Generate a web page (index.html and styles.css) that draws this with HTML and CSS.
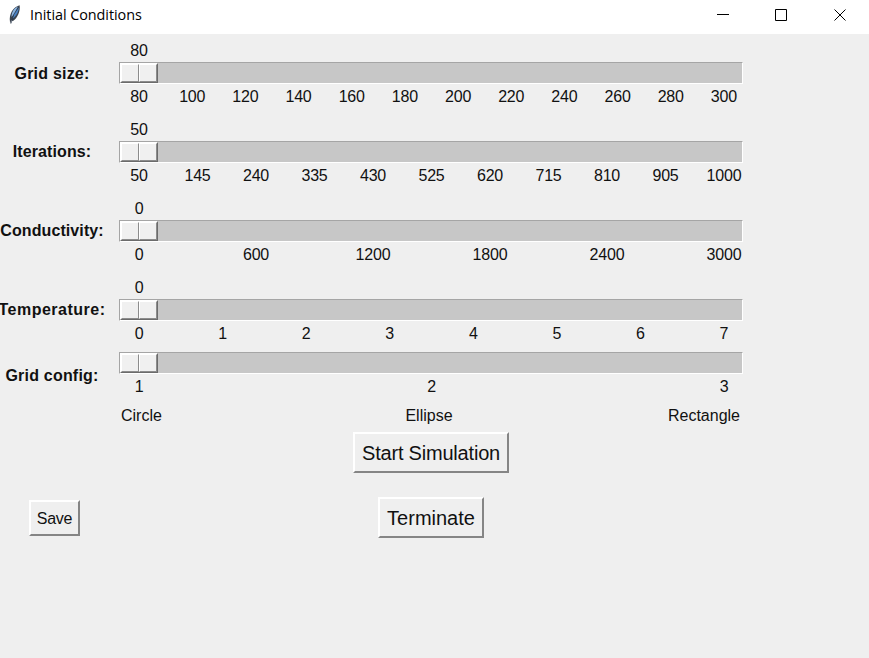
FILE: index.html
```
<!DOCTYPE html>
<html lang="en">
<head>
<meta charset="utf-8">
<title>Initial Conditions</title>
<link rel="stylesheet" href="styles.css">
</head>
<body>
<header class="titlebar">
  <svg class="feather" width="16" height="22" viewBox="0 0 16 22">
    <path d="M4 19C2.800 11 7 4 13.600 2.200C14.600 8 11.500 15 7 18L5 17.500L4.500 21Z" fill="#3b434e"/>
    <path d="M5.500 14C5.500 9 8 5 12 3.500L9 10Z" fill="#8bb4e0"/>
    <path d="M6.500 15.500C10 13.500 12.600 9 12.800 4.500L8 11.500Z" fill="#4a82c4"/>
    <path d="M12 4.500Q7 10.500 5 20.500" fill="none" stroke="#26364c" stroke-width=".7"/>
  </svg>
  <span class="title">Initial Conditions</span>
  <svg class="controls" width="130" height="14" viewBox="0 0 130 14" fill="none" stroke="#000">
    <path d="M0 6.500H12M58.500 1.500H69.500V12.500H58.500Z"/>
    <path d="M117.500 1.500L128.500 12.500M128.500 1.500L117.500 12.500"/>
  </svg>
</header>
<main>
  <section class="row">
    <div class="label grid-size">Grid size:</div>
    <div class="scale">
      <div class="value"><span>80</span></div>
      <div class="trough"><div class="thumb"><i></i><i></i></div></div>
      <div class="ticks"><span>80</span><span>100</span><span>120</span><span>140</span><span>160</span><span>180</span><span>200</span><span>220</span><span>240</span><span>260</span><span>280</span><span>300</span></div>
    </div>
  </section>
  <section class="row">
    <div class="label">Iterations:</div>
    <div class="scale">
      <div class="value"><span>50</span></div>
      <div class="trough"><div class="thumb"><i></i><i></i></div></div>
      <div class="ticks"><span>50</span><span>145</span><span>240</span><span>335</span><span>430</span><span>525</span><span>620</span><span>715</span><span>810</span><span>905</span><span>1000</span></div>
    </div>
  </section>
  <section class="row">
    <div class="label">Conductivity:</div>
    <div class="scale">
      <div class="value"><span>0</span></div>
      <div class="trough"><div class="thumb"><i></i><i></i></div></div>
      <div class="ticks"><span>0</span><span>600</span><span>1200</span><span>1800</span><span>2400</span><span>3000</span></div>
    </div>
  </section>
  <section class="row">
    <div class="label temperature">Temperature:</div>
    <div class="scale">
      <div class="value"><span>0</span></div>
      <div class="trough"><div class="thumb"><i></i><i></i></div></div>
      <div class="ticks"><span>0</span><span>1</span><span>2</span><span>3</span><span>4</span><span>5</span><span>6</span><span>7</span></div>
    </div>
  </section>
  <section class="row config">
    <div class="label">Grid config:</div>
    <div class="scale">
      <div class="trough"><div class="thumb"><i></i><i></i></div></div>
      <div class="ticks"><span>1</span><span>2</span><span>3</span></div>
    </div>
  </section>
  <div class="shapes"><span>Circle</span><span>Ellipse</span><span>Rectangle</span></div>
  <button class="btn start">Start Simulation</button>
  <div class="actions">
    <button class="btn save">Save</button>
    <button class="btn terminate">Terminate</button>
  </div>
</main>
</body>
</html>
```
FILE: styles.css
```
* { box-sizing: border-box; }
body {
  margin: 0;
  height: 658px;
  overflow: hidden;
  background: #efefef;
  color: #111;
  font: 16px/20px "Liberation Sans", Arial, sans-serif;
}
.titlebar {
  display: flex;
  align-items: center;
  height: 34px;
  padding: 0 22px 4px 6px;
  background: #fff;
}
.feather { margin-top: -2px; }
.title {
  margin-left: 8px;
  font: 14.4px/20px "Open Sans", "Noto Sans", sans-serif;
  letter-spacing: -0.05px;
  color: #000;
}
.controls { margin-left: auto; }
main { display: flex; flex-direction: column; }
.row { display: flex; height: 79px; padding-top: 6px; }
.label {
  display: flex;
  justify-content: center;
  width: 104px;
  margin-right: 15px;
  padding-top: 23px;
  font-weight: bold;
  letter-spacing: 0.1px;
  white-space: nowrap;
}
.grid-size { padding-top: 24px; letter-spacing: 0.2px; }
.temperature { letter-spacing: 0.5px; }
.scale { width: 624px; }
.value, .ticks {
  display: flex;
  justify-content: space-between;
  padding: 0 19px 0 20px;
}
.value { height: 22px; padding-top: 1px; }
.ticks { padding-top: 3px; }
.value span, .ticks span {
  display: flex;
  justify-content: center;
  width: 0;
  letter-spacing: -0.2px;
}
.trough {
  height: 22px;
  border: 1px solid;
  border-color: #a5a5a5 #fff #fff #a5a5a5;
  background: #c7c7c7;
}
.thumb {
  display: flex;
  width: 38px;
  height: 20px;
  border: 1px solid;
  border-color: #fff #6b6b6b #6b6b6b #fff;
}
.thumb i {
  width: 18px;
  border: 1px solid;
  border-color: #fff #8c8c8c #8c8c8c #fff;
  background: #f0f0f0;
}
.config { height: 56px; padding-top: 2px; }
.config .label { padding-top: 14px; letter-spacing: 0.2px; }
.shapes {
  display: grid;
  grid-template-columns: 1fr auto 1fr;
  width: 616px;
  margin: 0 0 0 121px;
}
.shapes span { width: max-content; }
.shapes span:last-child { margin-right: -3px; justify-self: end; }
.btn {
  padding: 1px 0 0;
  border: 2px solid;
  border-color: #fff #858585 #858585 #fff;
  background: #efefef;
  color: #111;
  font: 20px/24px "Liberation Sans", Arial, sans-serif;
  white-space: nowrap;
}
.start { width: 156px; height: 41px; margin: 6px 0 0 353px; letter-spacing: -0.2px; }
.actions { display: flex; align-items: center; margin-top: 24px; }
.save { width: 51px; height: 36px; margin-left: 29px; padding-top: 2px; font-size: 16px; letter-spacing: -0.3px; }
.terminate { width: 106px; height: 41px; margin-left: 298px; }
```
